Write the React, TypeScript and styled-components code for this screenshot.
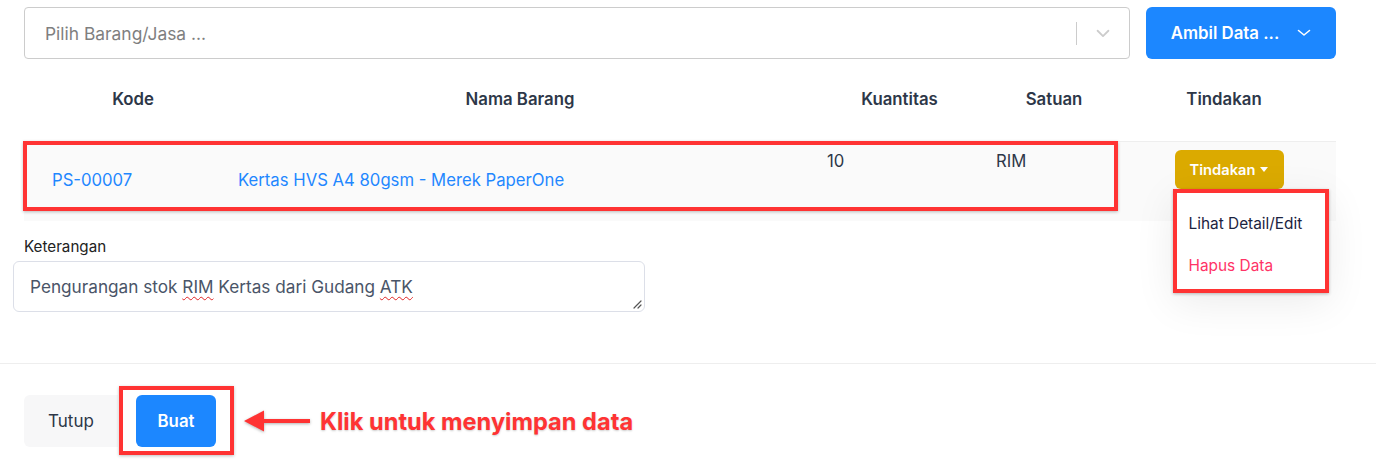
import React from "react";
import styled, { createGlobalStyle } from "styled-components";

const GlobalStyle = createGlobalStyle`
  html, body {
    margin: 0;
    padding: 0;
    background: #ffffff;
    font-family: Inter, "Noto Sans", sans-serif;
    color: #2d3748;
  }
  * { box-sizing: border-box; }
`;

const Page = styled.div`
  width: 1376px;
  height: 469px;
  overflow: hidden;
  display: flex;
  flex-direction: column;
`;

const Body = styled.div`
  padding: 7px 40px 0 24px;
  display: flex;
  flex-direction: column;
`;

/* ---------- top pick bar ---------- */

const PickBar = styled.div`
  display: flex;
  gap: 16px;
  height: 52px;
`;

const SelectBox = styled.div`
  flex: 1;
  display: flex;
  align-items: center;
  border: 1px solid #cccccc;
  border-radius: 4px;
  padding-left: 20px;
`;

const Placeholder = styled.span`
  flex: 1;
  font-size: 17.4px;
  color: #7f7f7f;
`;

const Separator = styled.span`
  width: 1px;
  height: 23px;
  background: #cccccc;
`;

const Caret = styled.span`
  width: 52px;
  display: flex;
  align-items: center;
  justify-content: center;
  color: #cccccc;
`;

const PrimaryButton = styled.button<{ $w?: number }>`
  height: 52px;
  width: ${(p) => (p.$w ? `${p.$w}px` : "auto")};
  border: none;
  border-radius: 6px;
  background: #1c87ff;
  color: #ffffff;
  font-family: Inter, sans-serif;
  font-size: 16.8px;
  font-weight: 600;
  display: flex;
  align-items: center;
  justify-content: center;
  gap: 18px;
  padding: 0;
  cursor: pointer;
`;

/* ---------- table ---------- */

const cols = "190px 588px 170px 140px 224px";

const HeadRow = styled.div`
  display: grid;
  grid-template-columns: ${cols};
  margin-top: 21px;
  height: 61px;
`;

const Th = styled.div<{ $pl: number; $pr?: number }>`
  padding: 9px ${(p) => p.$pr ?? 0}px 0 ${(p) => p.$pl}px;
  text-align: center;
  font-size: 16.8px;
  font-weight: 600;
  line-height: 20px;
  color: #2d3748;
`;

const BodyRow = styled.div`
  position: relative;
  display: grid;
  grid-template-columns: ${cols};
  height: 80px;
  background: #fafafa;
  border-top: 1px solid #eeeeee;
`;

const Td = styled.div<{ $pl: number; $top?: boolean; $link?: boolean }>`
  padding-left: ${(p) => p.$pl}px;
  padding-top: ${(p) => (p.$top ? "9px" : "0")};
  padding-bottom: ${(p) => (p.$top ? "0" : "3px")};
  display: flex;
  align-items: ${(p) => (p.$top ? "flex-start" : "center")};
  font-size: 16.7px;
  line-height: 20px;
  color: ${(p) => (p.$link ? "#1f87ff" : "#2d3748")};
`;

const ActionCell = styled.div`
  padding: 8px 14px 0 24px;
  display: flex;
  justify-content: center;
  align-items: flex-start;
`;

const ActionWrap = styled.div`
  position: relative;
`;

const ActionButton = styled.button`
  width: 109px;
  height: 39px;
  border: none;
  border-radius: 6px;
  background: #dbaa00;
  color: #ffffff;
  font-family: Inter, sans-serif;
  font-size: 14.7px;
  font-weight: 600;
  display: flex;
  align-items: center;
  justify-content: center;
  gap: 5px;
  cursor: pointer;
`;

const Menu = styled.div`
  position: absolute;
  top: 100%;
  left: -2px;
  width: 156px;
  height: 104px;
  background: #ffffff;
  border: 4px solid #ff3333;
  box-shadow: 0 10px 40px rgba(0, 0, 0, 0.08), 0 1px 3px rgba(0, 0, 0, 0.25);
  display: flex;
  flex-direction: column;
  padding-top: 12px;
  z-index: 2;
`;

const MenuItem = styled.div<{ $danger?: boolean }>`
  padding-left: 12px;
  height: 43px;
  line-height: 38px;
  font-size: 15.4px;
  color: ${(p) => (p.$danger ? "#ff3366" : "#1b2340")};
`;

/* annotation frame laid over content */
const Frame = styled.div<{ $l: number; $t: number; $w: number; $h: number }>`
  position: absolute;
  left: ${(p) => p.$l}px;
  top: ${(p) => p.$t}px;
  width: ${(p) => p.$w}px;
  height: ${(p) => p.$h}px;
  border: 4px solid #ff3333;
  box-shadow: 0 1px 3px rgba(0, 0, 0, 0.25);
  pointer-events: none;
`;

/* ---------- note ---------- */

const NoteBlock = styled.div`
  margin-top: 16px;
  display: flex;
  flex-direction: column;
`;

const Label = styled.label`
  font-size: 15.2px;
  line-height: 20px;
  color: #222222;
`;

const NoteBox = styled.div`
  position: relative;
  margin: 4px 0 0 -11px;
  width: 632px;
  height: 51px;
  border: 1px solid #dcdfe8;
  border-radius: 6px;
  padding: 14px 16px 0 16px;
  font-size: 17.2px;
  line-height: 22px;
  color: #4a5568;
`;

const Misspelled = styled.span`
  text-decoration: underline wavy #e02424;
  text-decoration-thickness: 1px;
  text-underline-offset: 3px;
`;

const Grip = styled.svg`
  position: absolute;
  right: 2px;
  bottom: 2px;
`;

const Divider = styled.div`
  margin-top: 51px;
  height: 1px;
  background: #eeeeee;
`;

/* ---------- footer ---------- */

const Footer = styled.div`
  display: flex;
  align-items: center;
  padding: 31px 24px 0;
`;

const GhostButton = styled.button`
  width: 94px;
  height: 52px;
  border: none;
  border-radius: 6px 0 0 6px;
  background: #f7f7f8;
  color: #2d3748;
  font-family: Inter, sans-serif;
  font-size: 17px;
  cursor: pointer;
`;

const SaveWrap = styled.div`
  position: relative;
  margin-left: 18px;
`;

const Callout = styled.div`
  display: flex;
  align-items: center;
  margin-left: 28px;
  gap: 10px;
`;

const CalloutText = styled.span`
  font-size: 23.6px;
  font-weight: 700;
  color: #ff3333;
  text-shadow: 0 1px 2px rgba(0, 0, 0, 0.2);
`;

const Chevron = ({ color, size = 14 }: { color: string; size?: number }) => (
  <svg width={size} height={size} viewBox="0 0 20 20" fill="none">
    <path d="M4 7.5l6 6 6-6" stroke={color} strokeWidth="2" strokeLinecap="round" strokeLinejoin="round" />
  </svg>
);

const App: React.FC = () => {
  return (
    <>
      <GlobalStyle />
      <Page>
        <Body>
          <PickBar>
            <SelectBox>
              <Placeholder>Pilih Barang/Jasa ...</Placeholder>
              <Separator />
              <Caret>
                <Chevron color="#cccccc" size={18} />
              </Caret>
            </SelectBox>
            <PrimaryButton $w={190}>
              Ambil Data ...
              <svg width="14" height="8" viewBox="0 0 14 8" fill="none">
                <path d="M1.5 1.5l5.5 4.5 5.5-4.5" stroke="#fff" strokeWidth="1.6" strokeLinecap="round" strokeLinejoin="round" />
              </svg>
            </PrimaryButton>
          </PickBar>

          <HeadRow>
            <Th $pl={28}>Kode</Th>
            <Th $pl={24}>Nama Barang</Th>
            <Th $pl={25}>Kuantitas</Th>
            <Th $pl={24}>Satuan</Th>
            <Th $pl={24} $pr={24}>Tindakan</Th>
          </HeadRow>

          <BodyRow>
            <Td $pl={28} $link>PS-00007</Td>
            <Td $pl={24} $link>Kertas HVS A4 80gsm - Merek PaperOne</Td>
            <Td $pl={25} $top>10</Td>
            <Td $pl={24} $top>RIM</Td>
            <ActionCell>
              <ActionWrap>
                <ActionButton>
                  Tindakan
                  <svg width="8" height="5" viewBox="0 0 8 5">
                    <path d="M0 0h8L4 5z" fill="#fff" />
                  </svg>
                </ActionButton>
                <Menu>
                  <MenuItem>Lihat Detail/Edit</MenuItem>
                  <MenuItem $danger>Hapus Data</MenuItem>
                </Menu>
              </ActionWrap>
            </ActionCell>
            <Frame $l={-1} $t={-1} $w={1095} $h={70} />
          </BodyRow>

          <NoteBlock>
            <Label>Keterangan</Label>
            <NoteBox role="textbox">
              Pengurangan stok <Misspelled>RIM</Misspelled> Kertas dari Gudang <Misspelled>ATK</Misspelled>
              <Grip width="10" height="10" viewBox="0 0 10 10">
                <path d="M9 2L2 9M9 6L6 9" stroke="#555" strokeWidth="1.2" strokeLinecap="round" />
              </Grip>
            </NoteBox>
          </NoteBlock>
        </Body>

        <Divider />

        <Footer>
          <GhostButton>Tutup</GhostButton>
          <SaveWrap>
            <PrimaryButton $w={80}>Buat</PrimaryButton>
            <Frame $l={-17} $t={-9} $w={115} $h={69} />
          </SaveWrap>
          <Callout>
            <svg width="66" height="24" viewBox="0 0 66 24" style={{ filter: "drop-shadow(0 1px 1.5px rgba(0,0,0,0.3))" }}>
              <path d="M0 12L20 1.5V10H66V14H20V22.5Z" fill="#ff3333" />
            </svg>
            <CalloutText>Klik untuk menyimpan data</CalloutText>
          </Callout>
        </Footer>
      </Page>
    </>
  );
};

export default App;
